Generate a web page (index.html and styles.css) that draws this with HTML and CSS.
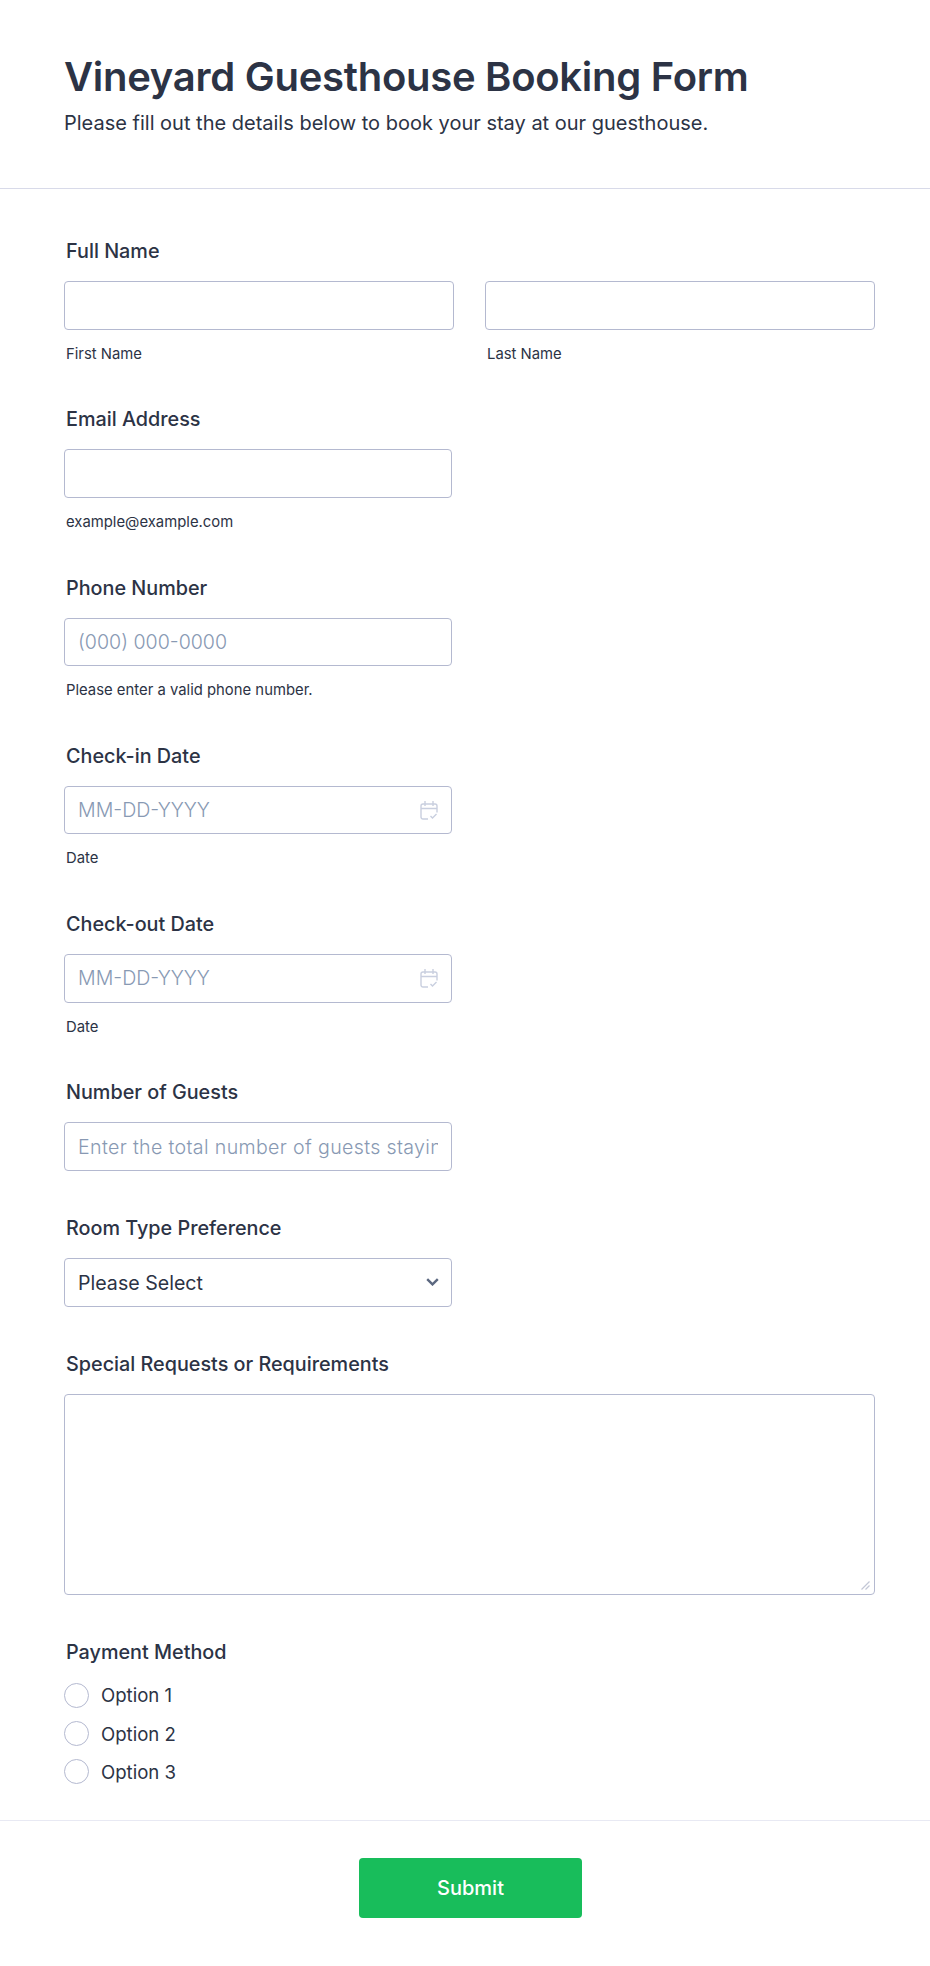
FILE: index.html
```html
<!DOCTYPE html>
<html lang="en">
<head>
  <meta charset="UTF-8" />
  <title>Vineyard Guesthouse Booking Form</title>
  <meta name="viewport" content="width=device-width, initial-scale=1" />
  <link rel="stylesheet" href="styles.css">
</head>
<body>
  <header class="form-header">
    <h1>Vineyard Guesthouse Booking Form</h1>
    <p>Please fill out the details below to book your stay at our guesthouse.</p>
  </header>

  <form class="form-body">
    <div class="field">
      <label class="field-label">Full Name</label>
      <div class="name-row">
        <div>
          <input class="text-input" type="text" />
          <span class="sublabel">First Name</span>
        </div>
        <div>
          <input class="text-input" type="text" />
          <span class="sublabel">Last Name</span>
        </div>
      </div>
    </div>

    <div class="field">
      <label class="field-label">Email Address</label>
      <div class="half">
        <input class="text-input" type="email" />
        <span class="sublabel">example@example.com</span>
      </div>
    </div>

    <div class="field">
      <label class="field-label">Phone Number</label>
      <div class="half">
        <input class="text-input" type="tel" placeholder="(000) 000-0000" />
        <span class="sublabel">Please enter a valid phone number.</span>
      </div>
    </div>

    <div class="field">
      <label class="field-label">Check-in Date</label>
      <div class="half">
        <div class="input-wrap">
          <input class="text-input" type="text" placeholder="MM-DD-YYYY" />
          <svg class="calendar-icon" width="18" height="19" viewBox="0 0 18 19" fill="none" stroke="#c9cfdf" stroke-width="1.4">
            <path d="M8 18H3a2 2 0 0 1-2-2V5a2 2 0 0 1 2-2h12a2 2 0 0 1 2 2v6.5" />
            <path d="M1 7.5h16M5 0v5M13 0v5" />
            <path d="M10.5 15l2 2 4-4" />
          </svg>
        </div>
        <span class="sublabel">Date</span>
      </div>
    </div>

    <div class="field">
      <label class="field-label">Check-out Date</label>
      <div class="half">
        <div class="input-wrap">
          <input class="text-input" type="text" placeholder="MM-DD-YYYY" />
          <svg class="calendar-icon" width="18" height="19" viewBox="0 0 18 19" fill="none" stroke="#c9cfdf" stroke-width="1.4">
            <path d="M8 18H3a2 2 0 0 1-2-2V5a2 2 0 0 1 2-2h12a2 2 0 0 1 2 2v6.5" />
            <path d="M1 7.5h16M5 0v5M13 0v5" />
            <path d="M10.5 15l2 2 4-4" />
          </svg>
        </div>
        <span class="sublabel">Date</span>
      </div>
    </div>

    <div class="field field-plain">
      <label class="field-label">Number of Guests</label>
      <div class="half">
        <input class="text-input guests-input" type="text" placeholder="Enter the total number of guests staying" />
      </div>
    </div>

    <div class="field field-plain">
      <label class="field-label">Room Type Preference</label>
      <div class="half">
        <div class="input-wrap">
          <select class="text-input select-input">
            <option>Please Select</option>
          </select>
          <svg class="chevron-icon" width="13" height="8" viewBox="0 0 13 8" fill="none" stroke="#5c6880" stroke-width="2.4">
            <path d="M1.2 1.2l5.3 5.2 5.3-5.2" />
          </svg>
        </div>
      </div>
    </div>

    <div class="field field-area">
      <label class="field-label">Special Requests or Requirements</label>
      <div class="input-wrap">
        <textarea class="text-input text-area"></textarea>
        <svg class="resize-grip" width="9" height="9" viewBox="0 0 9 9" fill="none" stroke="#c3c7d6" stroke-width="1.2">
          <path d="M.5 8.5l8-8M4.5 8.5l4-4" />
        </svg>
      </div>
    </div>

    <div class="field field-last">
      <label class="field-label">Payment Method</label>
      <div class="radio-list">
        <label class="radio-row"><input type="radio" name="payment" /> Option 1</label>
        <label class="radio-row"><input type="radio" name="payment" /> Option 2</label>
        <label class="radio-row"><input type="radio" name="payment" /> Option 3</label>
      </div>
    </div>
  </form>

  <footer class="form-footer">
    <button class="submit-btn" type="button">Submit</button>
  </footer>
</body>
</html>
```

FILE: styles.css
```css
* {
  box-sizing: border-box;
}
body {
  margin: 0;
  font-family: 'Inter', sans-serif;
  background: #fff;
  color: #2c3345;
}
.form-header {
  height: 189px;
  padding: 52px 64px 0;
  border-bottom: 1px solid #d8dae9;
}
h1 {
  margin: 0;
  font-size: 40px;
  line-height: 50px;
  font-weight: 600;
  letter-spacing: -0.27px;
}
.form-header p {
  margin: 6px 0 0;
  font-size: 20px;
  line-height: 30px;
}
.form-body {
  padding: 48px 55px 0 64px;
}
.field {
  margin-bottom: 41.75px;
}
.field-plain {
  margin-bottom: 43.5px;
}
.field-area {
  margin-bottom: 43px;
}
.field-label {
  display: block;
  margin: 0 0 16px 2px;
  font-size: 19.8px;
  line-height: 28px;
  font-weight: 500;
}
.name-row {
  display: grid;
  grid-template-columns: 1fr 1fr;
  gap: 31px;
}
.half {
  width: 388px;
}
.text-input {
  display: block;
  width: 100%;
  height: 48.5px;
  padding: 0 13px;
  border: 1px solid #b4b9d0;
  border-radius: 4px;
  background: #fff;
  font-family: inherit;
  font-size: 19.6px;
  color: #2c3345;
}
.text-input::placeholder {
  color: #8899b3;
  opacity: 1;
  font-weight: 300;
}
.guests-input::placeholder {
  letter-spacing: 0.35px;
}
.sublabel {
  display: block;
  margin: 14px 0 0 2px;
  font-size: 14.85px;
  line-height: 20px;
}
.input-wrap {
  position: relative;
}
.calendar-icon {
  position: absolute;
  top: 15px;
  right: 14px;
}
.chevron-icon {
  position: absolute;
  top: 20px;
  right: 13px;
  pointer-events: none;
}
.select-input {
  appearance: none;
}
.text-area {
  height: 201px;
  resize: none;
}
.resize-grip {
  position: absolute;
  right: 5px;
  bottom: 5px;
  pointer-events: none;
}
.field-last {
  margin-bottom: 0;
}
.radio-list {
  margin-top: -6px;
}
.radio-row {
  display: flex;
  align-items: center;
  gap: 12px;
  height: 38.3px;
  font-size: 18.6px;
}
.radio-row input {
  appearance: none;
  width: 25px;
  height: 25px;
  margin: 0;
  border: 1px solid #b4b9d0;
  border-radius: 50%;
  background: #fff;
}
.form-footer {
  margin-top: 29px;
  padding: 37px 54px 0 65px;
  border-top: 1px solid #e8e9f3;
  display: flex;
  justify-content: center;
}
.submit-btn {
  width: 223px;
  height: 60px;
  border: none;
  border-radius: 4px;
  background: #18bd5b;
  color: #fff;
  font-family: inherit;
  font-size: 20px;
  font-weight: 500;
}
```
